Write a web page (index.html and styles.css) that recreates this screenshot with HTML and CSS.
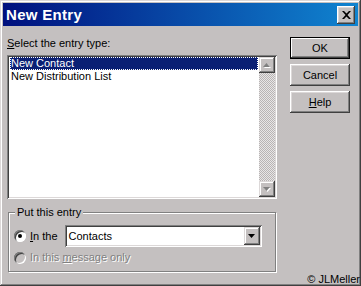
FILE: index.html
```html
<!DOCTYPE html>
<html lang="en">
<head>
    <meta charset="UTF-8">
    <title>New Entry</title>
    <link rel="stylesheet" href="styles.css">
</head>
<body>
    <div class="window">
        <div class="titlebar">
            <span class="title">New Entry</span>
            <div class="close-btn">
                <svg width="9" height="8" viewBox="0 0 9 8"><path d="M0 0h2l2.5 2.5L7 0h2L5.5 4 9 8H7L4.5 5.5 2 8H0l3.5-4z" fill="#000"/></svg>
            </div>
        </div>
        <div class="dialog">
            <div class="main">
                <div class="label"><u>S</u>elect the entry type:</div>
                <div class="listbox">
                    <ul class="items">
                        <li class="item selected">New Contact</li>
                        <li class="item">New Distribution List</li>
                    </ul>
                    <div class="scrollbar">
                        <div class="sb-btn">
                            <svg width="8" height="5" viewBox="0 0 8 5"><path d="M4.5 1L8 5H1z" fill="#fff"/><path d="M3.5 0L7 4H0z" fill="#808080"/></svg>
                        </div>
                        <div class="sb-track"></div>
                        <div class="sb-btn">
                            <svg width="8" height="5" viewBox="0 0 8 5"><path d="M1 1h7L4.5 5z" fill="#fff"/><path d="M0 0h7L3.5 4z" fill="#808080"/></svg>
                        </div>
                    </div>
                </div>
                <fieldset class="group">
                    <legend>Put this entry</legend>
                    <div class="radio-row">
                        <span class="radio checked"></span>
                        <span class="radio-label"><u>I</u>n the</span>
                        <div class="combo">
                            <span class="combo-value">Contacts</span>
                            <span class="combo-btn">
                                <svg width="7" height="4" viewBox="0 0 7 4"><path d="M0 0h7L3.5 4z" fill="#000"/></svg>
                            </span>
                        </div>
                    </div>
                    <div class="radio-row disabled">
                        <span class="radio"></span>
                        <span class="radio-label">In this <u>m</u>essage only</span>
                    </div>
                </fieldset>
            </div>
            <div class="buttons">
                <div class="btn default">OK</div>
                <div class="btn">Cancel</div>
                <div class="btn"><u>H</u>elp</div>
            </div>
        </div>
        <div class="copyright">© JLMeller</div>
    </div>
</body>
</html>
```

FILE: styles.css
```css
*{
    margin: 0;
    padding: 0;
    box-sizing: border-box;
}
body{
    font-family: "Liberation Sans", Arial, sans-serif;
    font-size: 11px;
    background: #c4c0c0;
}
.window{
    position: relative;
    width: 361px;
    height: 286px;
    padding: 3px;
    background: #c4c0c0;
    box-shadow: inset -1px -1px #404040, inset 1px 1px #dcd8d8, inset -2px -2px #808080, inset 2px 2px #fff;
}
.titlebar{
    height: 23px;
    display: flex;
    align-items: center;
    justify-content: space-between;
    padding: 0 3px;
    background: linear-gradient(to right, #00107e, #1084d0);
}
.title{
    color: #fff;
    font-weight: bold;
    font-size: 15px;
    letter-spacing: 0.3px;
}
.close-btn{
    width: 18px;
    height: 18px;
    display: flex;
    align-items: center;
    justify-content: center;
    background: #c4c0c0;
    box-shadow: inset -1px -1px #404040, inset 1px 1px #fff, inset -2px -2px #808080, inset 2px 2px #dcd8d8;
}
.dialog{
    display: flex;
    gap: 13px;
    padding: 11px 8px 0 4px;
}
.main{
    width: 270px;
}
.label{
    line-height: 13px;
}
.listbox{
    margin-top: 5px;
    height: 144px;
    display: flex;
    padding: 2px;
    background: #fff;
    box-shadow: inset 1px 1px #808080, inset -1px -1px #fff, inset 2px 2px #404040, inset -2px -2px #dcd8d8;
}
.items{
    flex: 1;
    list-style: none;
    padding: 0 1px;
}
.item{
    line-height: 13px;
    padding-left: 1px;
}
.item.selected{
    background: #0a1f74;
    color: #fff;
    outline: 1px dotted #fff;
    outline-offset: -1px;
}
.scrollbar{
    width: 16px;
    display: flex;
    flex-direction: column;
}
.sb-btn{
    height: 16px;
    display: flex;
    align-items: center;
    justify-content: center;
    background: #c4c0c0;
    box-shadow: inset -1px -1px #404040, inset 1px 1px #dcd8d8, inset -2px -2px #808080, inset 2px 2px #fff;
}
.sb-track{
    flex: 1;
    background: repeating-conic-gradient(#e8e6e6 0 25%, #b8b4b4 0 50%) 0 0 / 2px 2px;
}
.group{
    margin: 7px 0 0 1px;
    width: 268px;
    border: 1px solid #808080;
    box-shadow: 1px 1px #fff, inset 1px 1px #fff;
    padding: 6px 5px 7px 5px;
}
.group legend{
    margin-left: 1px;
    padding: 0 2px;
    line-height: 13px;
    background: #c4c0c0;
}
.radio-row{
    display: flex;
    align-items: center;
}
.radio-row.disabled{
    margin-top: 4px;
    color: #808080;
    text-shadow: 1px 1px #fff;
}
.radio{
    width: 12px;
    height: 12px;
    border-radius: 50%;
    background: #fff;
    box-shadow: inset 1px 1px #808080, inset -1px -1px #fff, inset 2px 2px #404040;
    display: flex;
    align-items: center;
    justify-content: center;
}
.radio.checked::after{
    content: "";
    width: 4px;
    height: 4px;
    border-radius: 50%;
    background: #000;
}
.disabled .radio{
    background: #c4c0c0;
}
.radio-label{
    margin-left: 4px;
    line-height: 13px;
}
.combo{
    margin-left: 7px;
    width: 197px;
    height: 22px;
    display: flex;
    align-items: center;
    padding: 2px;
    background: #fff;
    box-shadow: inset 1px 1px #808080, inset -1px -1px #fff, inset 2px 2px #404040, inset -2px -2px #dcd8d8;
}
.combo-value{
    flex: 1;
    padding-left: 2px;
}
.combo-btn{
    width: 16px;
    height: 18px;
    display: flex;
    align-items: center;
    justify-content: center;
    background: #c4c0c0;
    box-shadow: inset -1px -1px #404040, inset 1px 1px #dcd8d8, inset -2px -2px #808080, inset 2px 2px #fff;
}
.buttons{
    width: 60px;
    display: flex;
    flex-direction: column;
    gap: 5px;
}
.btn{
    height: 22px;
    display: flex;
    align-items: center;
    justify-content: center;
    background: #c4c0c0;
    box-shadow: inset -1px -1px #404040, inset 1px 1px #fff, inset -2px -2px #808080, inset 2px 2px #dcd8d8;
}
.btn.default{
    box-shadow: inset 0 0 0 1px #000, inset -2px -2px #404040, inset 2px 2px #fff, inset -3px -3px #808080;
}
.copyright{
    position: absolute;
    right: 1px;
    bottom: 0;
    font-family: Arial, "Liberation Sans", sans-serif;
    line-height: 13px;
}
```
